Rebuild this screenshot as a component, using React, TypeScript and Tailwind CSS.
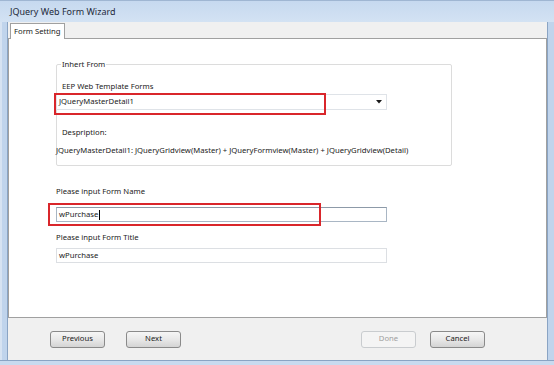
import React from "react";

function Btn({ label, disabled }: { label: string; disabled?: boolean }) {
  return (
    <div
      className={
        "flex h-[17px] w-[55px] items-center justify-center rounded-[3px] border text-[7.7px] " +
        (disabled
          ? "border-[#c9cccf] bg-[#f4f4f4] text-[#a0a0a0]"
          : "border-[#8a8a8a] bg-gradient-to-b from-[#f6f6f6] via-[#e8e8e8] to-[#d4d4d4] text-[#1a1a1a]")
      }
    >
      {label}
    </div>
  );
}

export default function App() {
  return (
    <div
      className="relative flex h-[365px] w-[554px] flex-col overflow-hidden bg-[#c3d6ee]"
      style={{ fontFamily: '"Noto Sans", "Open Sans", sans-serif' }}
    >
      {/* title bar */}
      <div className="flex h-[22px] shrink-0 items-center border-t border-[#9fb6d2] bg-gradient-to-b from-[#c6d9ef] to-[#d3e2f3] pl-[10px] text-[9px] text-[#1e2a3a]">
        JQuery Web Form Wizard
      </div>
      <div className="flex flex-1">
        {/* left frame */}
        <div className="w-[8px] shrink-0 border-l-[2px] border-l-[#d7e3f2] bg-[#c0d4ec] shadow-[inset_-1px_0_0_#8aa4c4]" />
        {/* client */}
        <div className="flex flex-1 flex-col bg-[#f0f0f0]">
          {/* tab strip */}
          <div className="flex h-[16px] shrink-0 items-end pl-[2px]">
            <div className="relative -mb-px flex h-[16px] items-center border border-b-0 border-[#a0a0a0] bg-white px-[3px] text-[7.7px] text-[#1a1a1a]">
              Form Setting
            </div>
          </div>
          {/* tab panel */}
          <div className="h-[280px] shrink-0 border border-[#a0a0a0] bg-white pl-[47px] pt-[25px] text-[7.7px] text-[#222]">
            {/* group box */}
            <div className="relative h-[102px] w-[396px] rounded-[2px] border border-[#dcdcdc] pl-[5px] pt-[16px]">
              <div className="absolute left-[4px] top-[-6px] bg-white px-[1px] leading-[10px]">Inhert From</div>
              <div className="leading-[10px]">EEP Web Template Forms</div>
              <div className="relative ml-[-6px] mt-[3px] flex h-[16px] w-[331px] items-center justify-between border border-[#dfe3e8] bg-white pl-[2px] pr-[4px]">
                <span>JQueryMasterDetail1</span>
                <svg width="6" height="4" viewBox="0 0 6 4">
                  <path d="M0 0 L6 0 L3 3.5 Z" fill="#1a1a1a" />
                </svg>
                <div className="pointer-events-none absolute left-[-3px] top-[-2px] h-[22px] w-[272px] border-2 border-[#d9262b]" />
              </div>
              <div className="mt-[17px] leading-[10px]">Despription:</div>
              <div className="mt-[8px] ml-[-6px] leading-[10px]">
                JQueryMasterDetail1: JQueryGridview(Master) + JQueryFormview(Master) + JQueryGridview(Detail)
              </div>
            </div>
            {/* form name */}
            <div className="mt-[20px] leading-[10px]">Please input Form Name</div>
            <div className="relative mt-[11px] flex h-[15px] w-[331px] items-center border border-[#a9b6c4] border-t-[#8d9aa8] bg-white pl-[2px]">
              <span>wPurchase</span>
              <span className="ml-[1px] h-[10px] w-px bg-black" />
              <div className="pointer-events-none absolute left-[-9px] top-[-5px] h-[23px] w-[273px] border-2 border-[#d9262b]" />
            </div>
            <div className="mt-[10px] leading-[10px]">Please input Form Title</div>
            <div className="mt-[6px] flex h-[15px] w-[331px] items-center border border-[#dcdfe3] bg-white pl-[2px]">
              wPurchase
            </div>
          </div>
          {/* bottom buttons */}
          <div className="flex h-[42px] shrink-0 items-center pl-[42px] pr-[62px]">
            <Btn label="Previous" />
            <div className="ml-[21px]">
              <Btn label="Next" />
            </div>
            <div className="flex-1" />
            <Btn label="Done" disabled />
            <div className="ml-[14px]">
              <Btn label="Cancel" />
            </div>
          </div>
        </div>
        {/* right frame */}
        <div className="w-[7px] shrink-0 bg-[#c0d4ec] shadow-[inset_1px_0_0_#8aa4c4]" />
      </div>
      {/* bottom frame */}
      <div className="h-[5px] shrink-0 bg-[#c8daef] shadow-[inset_0_1px_0_#8aa4c4]" />
    </div>
  );
}
